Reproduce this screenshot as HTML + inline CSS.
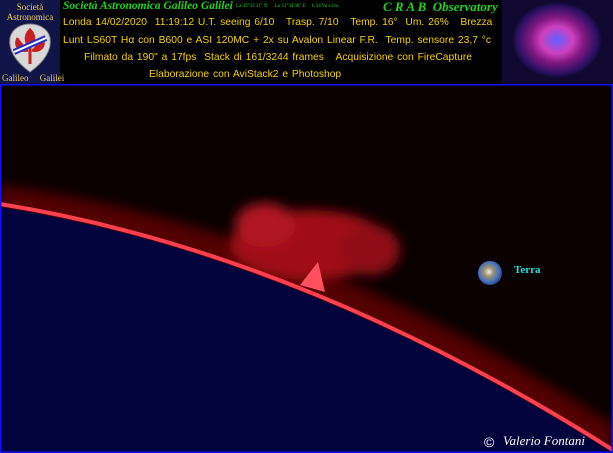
<!DOCTYPE html>
<html><head><meta charset="utf-8"><style>
body{margin:0;width:613px;height:453px;overflow:hidden;background:#000;position:relative;font-family:"Liberation Sans",sans-serif}
.t{position:absolute;white-space:nowrap;color:#f5d000;font-size:10.3px;word-spacing:1px}
.g{position:absolute;white-space:nowrap;color:#1fd21f;font-family:"Liberation Serif",serif}
</style></head><body>
<div style="position:absolute;left:0;top:0;width:60px;height:84px;background:#101446">
<div style="position:absolute;left:0;top:2px;width:60px;text-align:center;color:#f0d060;font:9px/10px 'Liberation Serif',serif">Società<br>Astronomica</div>
<svg style="position:absolute;left:6px;top:22px" width="48" height="52"><path d="M24 50 C10 40 2 28 4 16 C6 6 16 2 24 2 C32 2 42 6 44 16 C46 28 38 40 24 50Z" fill="#d8d8d8" stroke="#888"/>
<path d="M24 8 C18 14 20 22 24 24 C28 22 30 14 24 8Z M12 16 C8 24 14 30 22 28 M36 16 C40 24 34 30 26 28 M24 24 L24 42" fill="#c82020" stroke="#c82020" stroke-width="3"/>
<path d="M8 30 L40 16" stroke="#2030c0" stroke-width="6"/><path d="M8 30 L40 16" stroke="#fff" stroke-width="2"/></svg>
<div style="position:absolute;left:2px;top:73px;color:#f0d060;font:9px 'Liberation Serif',serif;white-space:nowrap">Galileo&nbsp;&nbsp;&nbsp;&nbsp;&nbsp;Galilei</div>
</div>
<div class="g" style="left:63px;top:0px;font-size:11.5px;font-style:italic;font-weight:bold">Società Astronomica Galileo Galilei</div>
<div class="g" style="left:236px;top:4px;font-size:5px">La 43°33'31" N &nbsp;&nbsp;&nbsp;&nbsp; Lo 11°34'38" E &nbsp;&nbsp;&nbsp; h 347m s.l.m.</div>
<div class="g" style="left:383px;top:-1px;font-size:13px;font-style:italic;font-weight:bold">C R A B &nbsp;Observatory</div>
<div class="t" style="left:63px;top:17px">Londa 14/02/2020 &nbsp;11:19:12 U.T. seeing 6/10 &nbsp;&nbsp;Trasp. 7/10 &nbsp;&nbsp;Temp. 16° &nbsp;Um. 26% &nbsp;&nbsp;Brezza</div>
<div class="t" style="left:63px;top:35px">Lunt LS60T Hα con B600 e ASI 120MC + 2x su Avalon Linear F.R. &nbsp;Temp. sensore 23,7 °c</div>
<div class="t" style="left:84px;top:52px">Filmato da 190" a 17fps &nbsp;Stack di 161/3244 frames &nbsp;&nbsp;Acquisizione con FireCapture</div>
<div class="t" style="left:149px;top:69px">Elaborazione con AviStack2 e Photoshop</div>
<div style="position:absolute;left:502px;top:0;width:111px;height:84px;background:radial-gradient(ellipse 45px 38px at 55px 40px,#6060ff 0%,#d040c0 35%,#801880 60%,#281060 90%,#100830 100%)"></div>
<svg style="position:absolute;left:0;top:84px" width="613" height="369" viewBox="0 84 613 369">
<defs><filter id="b"><feGaussianBlur stdDeviation="6"/></filter></defs>
<rect x="0" y="84" width="613" height="369" fill="#0a0000"/>
<path d="M0 185 Q314 228 613 425 L613 453 L0 453Z" fill="#5a0000" filter="url(#b)" opacity="0.9"/>
<g filter="url(#b)"><ellipse cx="310" cy="245" rx="80" ry="35" fill="#a01018"/><ellipse cx="265" cy="225" rx="30" ry="22" fill="#b01820"/><ellipse cx="370" cy="250" rx="30" ry="25" fill="#901018"/></g>
<path d="M300 285 L318 262 L325 292Z" fill="#ff5060"/>
<path d="M0 204 Q300 252 613 450" fill="none" stroke="#ff4050" stroke-width="4"/>
<path d="M0 207 Q300 255 613 453 L0 453Z" fill="#02023c"/>
<rect x="0" y="84" width="613" height="369" fill="none" stroke="#1010ff" stroke-width="3"/>
</svg>
<div style="position:absolute;left:478px;top:261px;width:24px;height:24px;border-radius:50%;background:radial-gradient(circle at 45% 45%,#f0f0f0 0%,#a09070 25%,#4070c0 55%,#203070 80%,#101830)"></div>
<div style="position:absolute;left:514px;top:264px;color:#20e0e0;font:bold 11px 'Liberation Serif',serif">Terra</div>
<div style="position:absolute;left:484px;top:434px;color:#fff;font:14px 'Liberation Sans',sans-serif">©</div>
<div style="position:absolute;left:503px;top:433px;color:#fff;font:italic 13px 'Liberation Serif',serif;white-space:nowrap">Valerio Fontani</div>
</body></html>
